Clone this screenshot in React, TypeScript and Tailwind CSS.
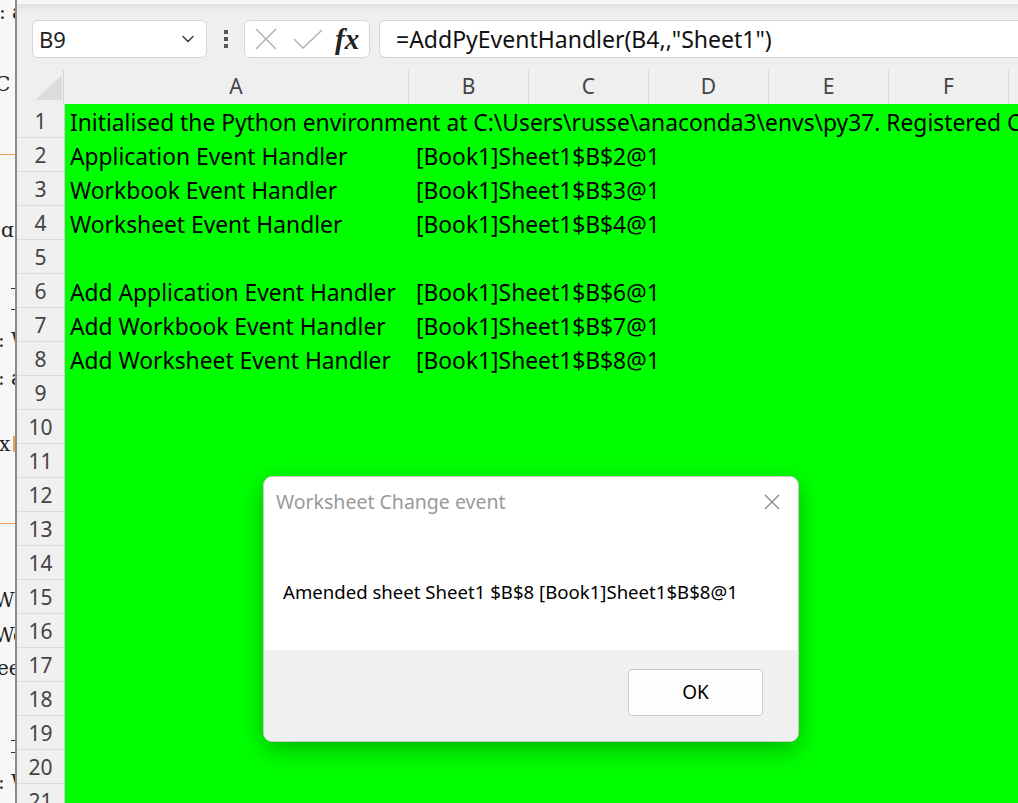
import React from "react";
import { ChevronDown } from "lucide-react";

const cols = [
  { l: "A", w: 345 },
  { l: "B", w: 120 },
  { l: "C", w: 120 },
  { l: "D", w: 120 },
  { l: "E", w: 120 },
  { l: "F", w: 120 },
  { l: "G", w: 120 },
];

const rows: [string, string][] = [
  ["Initialised the Python environment at C:\\Users\\russe\\anaconda3\\envs\\py37. Registered C", ""],
  ["Application Event Handler", "[Book1]Sheet1$B$2@1"],
  ["Workbook Event Handler", "[Book1]Sheet1$B$3@1"],
  ["Worksheet Event Handler", "[Book1]Sheet1$B$4@1"],
  ["", ""],
  ["Add Application Event Handler", "[Book1]Sheet1$B$6@1"],
  ["Add Workbook Event Handler", "[Book1]Sheet1$B$7@1"],
  ["Add Worksheet Event Handler", "[Book1]Sheet1$B$8@1"],
];

const fragments: { t: string; y: number; x: number }[] = [
  { t: ": a", y: 0, x: -1 },
  { t: "C s", y: 72, x: -5 },
  { t: "ɑ", y: 218, x: 1 },
  { t: ": W", y: 328, x: -2 },
  { t: ": a", y: 366, x: -2 },
  { t: "x", y: 432, x: -1 },
  { t: "W", y: 588, x: -6 },
  { t: "We", y: 623, x: -6 },
  { t: "ee", y: 656, x: -3 },
  { t: ": W", y: 770, x: -2 },
];

const dashes = [288, 309, 740, 752];

const uiFont = { fontFamily: '"Noto Sans", "Open Sans", Arial, sans-serif' };

export default function App() {
  return (
    <div
      className="relative flex h-[803px] w-[1018px] overflow-hidden bg-white"
      style={uiFont}
    >
      {/* background window strip */}
      <div className="relative h-full w-[15px] shrink-0 overflow-hidden bg-[#f7f7f7]">
        <div className="absolute left-0 top-[154px] h-[1px] w-full bg-[#f0a050]" />
        <div className="absolute left-0 top-[523px] h-[1px] w-full bg-[#f0a050]" />
        <div className="absolute left-[13px] top-[436px] h-[16px] w-[2px] bg-[#f0a050]" />
        {dashes.map((y) => (
          <div key={y} className="absolute left-[11px] h-[1px] w-[4px] bg-[#333]" style={{ top: y }} />
        ))}
        {fragments.map((f, i) => (
          <div
            key={i}
            className="absolute whitespace-nowrap text-[20px] leading-[24px] text-[#222]"
            style={{ top: f.y, left: f.x, fontFamily: '"DejaVu Serif", "Liberation Serif", serif' }}
          >
            {f.t}
          </div>
        ))}
      </div>
      <div className="h-full w-[2px] shrink-0 bg-[#8c8c8c]" />

      {/* Excel window */}
      <div className="flex min-w-0 flex-1 flex-col bg-[#efefef]">
        <div className="h-[4px] shrink-0 bg-[#f6f6f6]" />
        <div className="h-[10px] shrink-0 bg-gradient-to-b from-[#e2e2e2] to-[#efefef]" />
        {/* formula bar */}
        <div className="mt-[6px] flex h-[38px] shrink-0 items-center">
          <div className="ml-[15px] flex h-[38px] w-[175px] items-center justify-between rounded-[6px] border border-[#d6d6d6] bg-white pl-[6px] pr-[8px]">
            <span className="text-[22px] text-[#222]">B9</span>
            <ChevronDown size={20} strokeWidth={1.6} className="text-[#333]" />
          </div>
          <div className="flex w-[37px] flex-col items-center justify-center gap-[3px]">
            <div className="h-[4px] w-[4px] bg-[#555]" />
            <div className="h-[4px] w-[4px] bg-[#555]" />
            <div className="h-[4px] w-[4px] bg-[#555]" />
          </div>
          <div className="flex h-[38px] w-[126px] items-center rounded-[6px] border border-[#d6d6d6] bg-white">
            <svg width="24" height="22" viewBox="0 0 24 22" className="ml-[9px]">
              <path d="M2 1 L22 21 M22 1 L2 21" stroke="#b4b4b4" strokeWidth="1.6" fill="none" />
            </svg>
            <svg width="30" height="20" viewBox="0 0 30 20" className="ml-[15px]">
              <path d="M1 10 L10 19 L29 1" stroke="#b4b4b4" strokeWidth="1.6" fill="none" />
            </svg>
            <span
              className="ml-[12px] text-[29px] font-bold italic leading-none text-[#222]"
              style={{ fontFamily: '"Liberation Serif", "DejaVu Serif", serif' }}
            >
              fx
            </span>
          </div>
          <div className="ml-[9px] flex h-[38px] flex-1 items-center rounded-l-[6px] border border-r-0 border-[#d6d6d6] bg-white pl-[16px]">
            <span className="whitespace-nowrap text-[23px] text-[#111]">=AddPyEventHandler(B4,,"Sheet1")</span>
          </div>
        </div>

        {/* column headers */}
        <div className="mt-[12px] flex h-[34px] shrink-0">
          <div className="relative h-full w-[47px] shrink-0 border-r border-[#d4d4d4]">
            <svg width="28" height="26" viewBox="0 0 28 26" className="absolute left-[18px] top-[5px]">
              <polygon points="27,0 27,25 0,25" fill="#dcdcdc" />
            </svg>
          </div>
          {cols.map((c) => (
            <div
              key={c.l}
              className="flex h-full shrink-0 items-center justify-center border-r border-[#d8d8d8] text-[21px] text-[#444]"
              style={{ width: c.w }}
            >
              {c.l}
            </div>
          ))}
        </div>

        {/* grid */}
        <div className="flex flex-1">
          <div className="flex w-[48px] shrink-0 flex-col border-r border-[#cfcfcf] bg-[#f0f0f0]">
            {Array.from({ length: 21 }, (_, i) => (
              <div
                key={i}
                className="flex h-[34px] shrink-0 items-center justify-center border-b border-[#dcdcdc] pt-[3px] text-[21px] text-[#444]"
              >
                {i + 1}
              </div>
            ))}
          </div>
          <div className="flex flex-1 flex-col bg-[#00ff00]">
            {rows.map((r, i) => (
              <div key={i} className="flex h-[34px] shrink-0 items-center pt-[4px] text-[22.8px] text-black">
                <div className="w-[345px] shrink-0 whitespace-nowrap pl-[5px]">{r[0]}</div>
                <div className="whitespace-nowrap pl-[6px]">{r[1]}</div>
              </div>
            ))}
          </div>
        </div>
      </div>

      {/* dialog */}
      <div className="absolute left-[263px] top-[476px] flex h-[266px] w-[536px] flex-col overflow-hidden rounded-[9px] border border-[#c8c8c8] bg-white shadow-[0_8px_24px_rgba(0,0,0,0.28)]">
        <div className="flex h-[50px] shrink-0 items-start justify-between pl-[12px] pr-[18px] pt-[10px]">
          <span className="text-[19.5px] text-[#9a9a9a]">Worksheet Change event</span>
          <svg width="16" height="16" viewBox="0 0 16 16" className="mt-[7px]">
            <path d="M1 1 L15 15 M15 1 L1 15" stroke="#8a8a8a" strokeWidth="1.4" fill="none" />
          </svg>
        </div>
        <div className="flex flex-1 items-start pl-[19px] pt-[51px]">
          <span className="whitespace-nowrap text-[18.6px] text-black">Amended sheet Sheet1 $B$8 [Book1]Sheet1$B$8@1</span>
        </div>
        <div className="flex h-[91px] shrink-0 items-start justify-end bg-[#f0f0f0] pr-[35px] pt-[19px]">
          <div className="flex h-[47px] w-[135px] items-center justify-center rounded-[4px] border border-[#cccccc] bg-[#fdfdfd] text-[19px] text-black">
            OK
          </div>
        </div>
      </div>
    </div>
  );
}
